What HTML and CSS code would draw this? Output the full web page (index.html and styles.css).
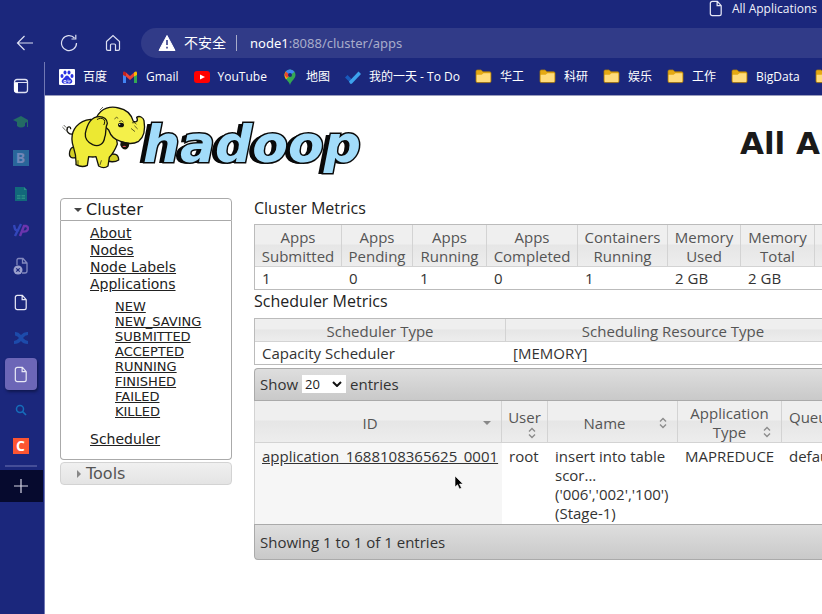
FILE: index.html
```html
<!DOCTYPE html>
<html lang="zh-CN">
<head>
<meta charset="utf-8">
<title>All Applications</title>
<link rel="stylesheet" href="styles.css">
</head>
<body>
<svg class="defs" aria-hidden="true">
  <symbol id="doc" viewBox="0 0 14 18"><path d="M3 1.5h5.5L12.500 6v8.500a2 2 0 0 1-2 2H3a2 2 0 0 1-2-2v-11a2 2 0 0 1 2-2zM8.200 1.500V6h4.300" fill="none" stroke="currentColor" stroke-width="1.300"/></symbol>
  <symbol id="folder" viewBox="0 0 18 16"><path d="M1 2.500Q1 1 2.500 1h4L8.500 3H15.500Q17 3 17 4.500V13q0 1.500-1.500 1.500h-13Q1 14.500 1 13z" fill="#e5a913" stroke="#a87b12" stroke-width=".8"/><path d="M1.700 6H7l2-1.500h7.300V13q0 .9-.9.9H2.600q-.9 0-.9-.9z" fill="#ffdc7c"/></symbol>
  <symbol id="sort" viewBox="0 0 8 12"><path d="M1 4.500 4 1.500 7 4.500M1 7.500 4 10.500 7 7.500" fill="none" stroke="#8c8c8c" stroke-width="1.400"/></symbol>
</svg>
<div class="browser">
  <div class="tabstrip">
    <svg class="doc-icon"><use href="#doc"/></svg>
    <span>All Applications</span>
  </div>
  <div class="toolbar">
    <button class="tool" aria-label="Back"><svg width="18" height="18" viewBox="0 0 18 18"><path d="M17 9H1.500M8.500 2 1.500 9l7 7"/></svg></button>
    <button class="tool" aria-label="Refresh"><svg width="18" height="18" viewBox="0 0 18 18"><path d="M16.500 9A7.500 7.500 0 1 1 14.500 4M15.800.8V5H11.500"/></svg></button>
    <button class="tool" aria-label="Home"><svg width="18" height="18" viewBox="0 0 18 18"><path d="M2.500 7.500 9 1.500l6.500 6V15q0 1.300-1.300 1.300H11.500V11q0-1-1-1h-3q-1 0-1 1v5.300H3.800Q2.500 16.300 2.500 15z"/></svg></button>
    <div class="address">
      <svg width="18" height="16" viewBox="0 0 18 16"><path d="M9 .5 17 15.500H1z" fill="#fff" stroke="#fff" stroke-linejoin="round"/><path d="M9 5v5M9 11.700v1.800" stroke="#313b88" stroke-width="1.600"/></svg>
      <span class="unsafe">不安全</span>
      <span class="bar"></span>
      <span class="url"><b>node1</b>:8088/cluster/apps</span>
    </div>
  </div>
  <div class="workspace">
    <nav class="vtabs" aria-label="Tabs">
      <button aria-label="Tab list"><svg width="16" height="16" viewBox="0 0 16 16"><rect x="1.500" y="1.500" width="13" height="13" rx="2.500" fill="none" stroke="#dfe1f2" stroke-width="1.300"/><path d="M1.500 4.500h13" stroke="#dfe1f2"/><path d="M1 5h4v9.500H3Q1 14.500 1 12.500z" fill="#fff"/></svg></button>
      <button aria-label="Courses"><svg width="16" height="16" viewBox="0 0 16 16"><path d="M0 6 8 2l7 4v7h-1V8l-2 1v3q-4 3-8 0V8z" fill="#246b64"/></svg></button>
      <button aria-label="B"><span class="tile tile-b">B</span></button>
      <button aria-label="Sheets"><svg width="16" height="16" viewBox="0 0 16 16"><path d="M2 1h9l3 3v11H2z" fill="#12697b"/><path d="M11 1l3 3h-3zM4 9h3.500v1.500H4zM8.500 9H12v1.500H8.500zM4 11.500h3.500V13H4zM8.500 11.500H12V13H8.500z" fill="#2a8d86"/></svg></button>
      <button aria-label="YP"><svg width="16" height="16" viewBox="0 0 16 16" fill="none" stroke-width="2.400"><path d="M1 3l1 4q.8 2 4 1M8 2 2 14" stroke="#3346bb"/><path d="M7 14 11 4h2q3 1 1.500 4-1 2-5 1.500" stroke="#6c35ad"/></svg></button>
      <button aria-label="Unavailable page"><svg width="16" height="18" viewBox="0 0 16 18"><path d="M4 8V3q0-1.500 1.500-1.500H10L14 6v8q0 2-2 2H9M9.500 1.500V6H14" fill="none" stroke="#8288bd" stroke-width="1.300"/><circle cx="5" cy="13" r="4.500" fill="#9a9fcc"/><path d="m3.300 11.300 3.400 3.400m0-3.400-3.400 3.400" stroke="#1b277c" stroke-width="1.200"/></svg></button>
      <button aria-label="Page"><svg class="doc-icon"><use href="#doc"/></svg></button>
      <button aria-label="Confluence"><svg width="16" height="16" viewBox="0 0 16 16"><path d="M2 2q3-.5 6 3 3-3.500 7-3v3q-3 0-5 3 2 2.500 5 3v3q-5 0-7-3-2.500 3-7 3v-3q3-.5 5-3-1-2-4-2.500z" fill="#1d4bab"/></svg></button>
      <button class="active" aria-label="All Applications"><svg class="doc-icon"><use href="#doc"/></svg></button>
      <button aria-label="Search"><svg width="12" height="12" viewBox="0 0 12 12"><circle cx="5" cy="5" r="3.500" fill="none" stroke="#166dba" stroke-width="1.500"/><path d="m7.500 7.500 3.500 3.500" stroke="#166dba" stroke-width="1.700"/></svg></button>
      <button aria-label="C"><span class="tile tile-c">C</span></button>
      <hr>
      <button class="add" aria-label="New tab"><svg width="16" height="16" viewBox="0 0 16 16"><path d="M8 1v14M1 8h14" stroke="#d7d8e6" stroke-width="1.200"/></svg></button>
    </nav>
    <div class="pane">
      <nav class="bookmarks" aria-label="Bookmarks">
        <a href="#"><svg width="16" height="16" viewBox="0 0 16 16"><rect width="16" height="16" rx="1" fill="#fff"/><g fill="#2932e1"><ellipse cx="3" cy="7" rx="1.500" ry="2"/><ellipse cx="6" cy="3.500" rx="1.500" ry="2"/><ellipse cx="10" cy="3.500" rx="1.500" ry="2"/><ellipse cx="13" cy="7" rx="1.500" ry="2"/><path d="M8 6.500q1.500 0 2.500 2l2 2q1.500 1.500.5 3t-3 1H6q-2 .5-3-1t.5-3l2-2q1-2 2.500-2z"/></g><path d="M5 11.500h2v2H5zM9 10.500v2.500h2v-2" fill="none" stroke="#fff" stroke-width=".8"/></svg>百度</a>
        <a href="#"><svg width="16" height="16" viewBox="0 0 16 16"><path d="M1 3.500V14h3V7z" fill="#4285f4"/><path d="M15 3.500V14h-3V7z" fill="#34a853"/><path d="M4 3.500 8 7l4-3.500v4L8 11 4 7.500z" fill="#ea4335"/><path d="M1 6V4q0-2 2-1.300l1 .8v4z" fill="#c5221f"/><path d="M15 6V4q0-2-2-1.300l-1 .8v4z" fill="#fbbc04"/></svg>Gmail</a>
        <a href="#"><svg width="16" height="16" viewBox="0 0 16 16"><rect y="2" width="16" height="12" rx="3" fill="#f00"/><path d="M6 5.500 11 8l-5 2.500z" fill="#fff"/></svg>YouTube</a>
        <a href="#"><svg width="16" height="16" viewBox="0 0 16 16"><path d="M8 .5a5.500 5.500 0 0 1 5.500 5.500c0 4-4 5-5.500 10-1-4-5.500-6-5.500-10A5.500 5.500 0 0 1 8 .5z" fill="#34a853"/><path d="M2.500 6a5.500 5.500 0 0 1 1.300-3.500L8 6l-4 4.500Q2.500 8.500 2.500 6z" fill="#fbbc04"/><path d="M3.800 2.500 8 6 5 9 2.500 6z" fill="#ea4335"/><path d="M3.800 2.500A5.500 5.500 0 0 1 12.500 3L8 6z" fill="#4285f4"/><circle cx="8" cy="6" r="2" fill="#1b277c"/></svg>地图</a>
        <a href="#"><svg width="16" height="16" viewBox="0 0 16 16"><path d="M0 8.500 2.500 6l6 6L6 14.500z" fill="#195abd"/><path d="m4 12.500 9.500-10L16 5l-9 9.500q-1 .8-2 0z" fill="#3da2ed"/></svg>我的一天 - To Do</a>
        <a href="#"><svg class="folder"><use href="#folder"/></svg>华工</a>
        <a href="#"><svg class="folder"><use href="#folder"/></svg>科研</a>
        <a href="#"><svg class="folder"><use href="#folder"/></svg>娱乐</a>
        <a href="#"><svg class="folder"><use href="#folder"/></svg>工作</a>
        <a href="#"><svg class="folder"><use href="#folder"/></svg>BigData</a>
        <a href="#" aria-label="More"><svg class="folder"><use href="#folder"/></svg></a>
      </nav>
      <div class="page">
        <header class="masthead">
          <a class="logo" href="#">
            <svg width="88" height="66" viewBox="30 20 264 198" stroke="#14140c" stroke-width="4" stroke-linejoin="round" stroke-linecap="round">
              <path d="M76 106c-18 12-28-4-24-14 2-5 10-4 10 2" fill="none"/>
              <path d="M77 150c-20-4-22 24-14 30 12 4 22 0 24-8M172 172c20-4 34-4 34 16-12 8-30 6-36 0z" fill="#d2cf25"/>
              <path d="M122 66C84 70 64 98 66 128c0 22 14 30 12 74q18 10 34 2l4-26q14 2 22 0l8 28q16 10 28 0l4-26q14-14 24-40l-10-64z" fill="#f0ec3a"/>
              <path d="M140 60C154 30 184 26 206 32c22 4 38 20 44 40 8 4 16 0 10-12 8-6 20 0 22 10 4 24 2 48-16 62-18 10-40 6-54 0-16-4-30-16-36-34l-34-32z" fill="#f4f04a"/>
              <path d="M214 134c-4 10 4 22 14 20 8-4 8-10 8-16z" fill="#171509"/>
              <path d="M217 149q6-8 12 0" fill="#d9535d" stroke="none"/>
              <path d="M148 58c-30 0-38 30-42 50-2 18 10 28 22 34 18 8 34-2 36-22 6-10 0-28 8-42 0-12-10-20-24-20z" fill="#ece832"/>
              <path d="M142 66c14-8 28 0 20 16" fill="none" stroke-width="3"/>
              <path d="M194 64q6-8 10-2M208 72q8-6 12 2" fill="none" stroke-width="2"/>
              <ellipse cx="213" cy="83" rx="7" ry="5" fill="#111"/>
              <circle cx="209" cy="81" r="2" fill="#fff" stroke="none"/>
              <path d="M244 94l10 8M254 86l8 8M247 76q10-2 12 4M84 190v12M154 190l-4 12M38 90l8 8M42 84l6 6M150 38l8-8" fill="none" stroke-width="2"/>
            </svg>
            <span class="wordmark">hadoop</span>
          </a>
          <h1>All Applications</h1>
        </header>
        <div class="columns">
          <nav class="side" aria-label="Cluster">
            <h3 class="open"><span class="arrow"></span>Cluster</h3>
            <div class="links">
              <ul>
                <li><a href="#">About</a></li>
                <li><a href="#">Nodes</a></li>
                <li><a href="#">Node Labels</a></li>
                <li><a href="#">Applications</a>
                  <ul>
                    <li><a href="#">NEW</a></li>
                    <li><a href="#">NEW_SAVING</a></li>
                    <li><a href="#">SUBMITTED</a></li>
                    <li><a href="#">ACCEPTED</a></li>
                    <li><a href="#">RUNNING</a></li>
                    <li><a href="#">FINISHED</a></li>
                    <li><a href="#">FAILED</a></li>
                    <li><a href="#">KILLED</a></li>
                  </ul>
                </li>
                <li><a href="#">Scheduler</a></li>
              </ul>
            </div>
            <h3 class="closed"><span class="arrow"></span>Tools</h3>
          </nav>
          <main class="content">
            <h2>Cluster Metrics</h2>
            <table class="metrics">
              <colgroup><col class="w87"><col class="w71"><col class="w74"><col class="w91"><col class="w90"><col class="w73"><col class="w74"><col></colgroup>
              <thead><tr><th>Apps Submitted</th><th>Apps Pending</th><th>Apps Running</th><th>Apps Completed</th><th>Containers Running</th><th>Memory Used</th><th>Memory Total</th><th></th></tr></thead>
              <tbody><tr><td>1</td><td>0</td><td>1</td><td>0</td><td>1</td><td>2 GB</td><td>2 GB</td><td></td></tr></tbody>
            </table>
            <h2>Scheduler Metrics</h2>
            <table class="metrics">
              <colgroup><col class="w251"><col class="w335"><col></colgroup>
              <thead><tr><th>Scheduler Type</th><th>Scheduling Resource Type</th><th></th></tr></thead>
              <tbody><tr><td>Capacity Scheduler</td><td>[MEMORY]</td><td></td></tr></tbody>
            </table>
            <div class="strip top">
              <label for="len">Show</label>
              <span class="picker"><select id="len"><option>20</option><option>40</option></select><svg width="10" height="6" viewBox="0 0 10 6"><path d="m1 1 4 4 4-4" fill="none" stroke="#111" stroke-width="2"/></svg></span>
              <span>entries</span>
            </div>
            <table class="apps">
              <colgroup><col class="w247"><col class="w46"><col class="w130"><col class="w104"><col></colgroup>
              <thead><tr>
                <th><div class="head"><span>ID</span><i class="desc"></i></div></th>
                <th><div class="head stack"><span>User</span><svg class="sort"><use href="#sort"/></svg></div></th>
                <th><div class="head"><span>Name</span><svg class="sort"><use href="#sort"/></svg></div></th>
                <th><div class="head low"><span>Application Type</span><svg class="sort"><use href="#sort"/></svg></div></th>
                <th class="left"><div class="head stack"><span>Queue</span><svg class="sort"><use href="#sort"/></svg></div></th>
              </tr></thead>
              <tbody><tr>
                <td class="sorted"><a href="#">application_1688108365625_0001</a></td>
                <td>root</td>
                <td>insert into table scor...<br>('006','002','100')<br>(Stage-1)</td>
                <td>MAPREDUCE</td>
                <td>default</td>
              </tr></tbody>
            </table>
            <div class="strip bottom">Showing 1 to 1 of 1 entries</div>
          </main>
        </div>
      </div>
    </div>
  </div>
</div>
<svg class="pointer" width="10" height="15" viewBox="0 0 10 15" aria-hidden="true"><path d="M1 1v11l2.500-2.300L5.500 14l2-1-2-4H9z" fill="#000" stroke="#fff" stroke-width=".6"/></svg>
</body>
</html>
```
FILE: styles.css
```css
* { box-sizing: border-box; }
body {
  margin: 0;
  overflow: hidden;
  background: #1b277c;
  color: #333;
  font-family: "Open Sans", "Noto Sans CJK SC", sans-serif;
  font-size: 15px;
}
h1, h2, h3, ul { margin: 0; padding: 0; }
ul { list-style: none; }
button { padding: 0; border: 0; background: none; }
svg { flex: none; }
.defs { position: absolute; width: 0; height: 0; }

/* Browser chrome */
.browser { display: flex; flex-direction: column; height: 100vh; overflow: hidden; }
.tabstrip {
  display: flex; justify-content: flex-end; align-items: flex-start; gap: 9px;
  height: 28px; padding-right: 5px;
  color: #f1f2fa; font: 12px/17px "Open Sans", sans-serif;
}
.doc-icon { width: 14px; height: 17px; color: #e6e7f5; }
.toolbar { display: flex; flex: none; align-items: flex-start; height: 34px; padding-left: 3px; }
.tool { display: grid; place-items: center; width: 44px; height: 30px; }
.tool svg { fill: none; stroke: #dcdff2; stroke-width: 1.2; }
.address {
  display: flex; flex: 1; align-items: center; gap: 8px;
  height: 30px; margin-left: 6px; padding-left: 17px;
  border-radius: 15px 0 0 15px; background: #313b88;
  color: #a8acca; font: 13px/20px "Noto Sans", "Noto Sans CJK SC", sans-serif;
}
.unsafe { color: #fff; font-size: 14px; }
.bar { width: 1px; height: 16px; margin: 0 5px 0 2px; background: #a8acca; }
.url b { color: #fff; font-weight: 400; }
.workspace { display: flex; flex: 1; min-height: 0; }
.vtabs {
  display: flex; flex: none; flex-direction: column; align-items: center;
  width: 45px; padding-top: 6px; border-right: 1px solid #7178b4;
}
.vtabs button { display: grid; place-items: center; flex: none; width: 32px; height: 32px; margin: 2px 3px 2px 0; border-radius: 4px; }
.vtabs .active { background: #6c66b7; box-shadow: 1px 2px 3px #10184f; }
.vtabs hr { width: 32px; height: 2px; margin: 1px 3px 3px 0; border: 0; background: #454e98; }
.vtabs .add { align-self: stretch; width: auto; margin: 0 1px 0 0; padding-right: 2px; border-radius: 0; background: #060a2e; }
.tile { display: grid; place-items: center; width: 16px; height: 16px; font: 700 14px/16px "Open Sans", sans-serif; }
.tile-b { background: #29669a; color: #7186b9; }
.tile-c { background: #fc5531; color: #fff; }
.pane { display: flex; flex: 1; flex-direction: column; min-width: 0; }
.bookmarks {
  display: flex; flex: none; align-items: center; gap: 15px;
  height: 34px; padding: 0 0 4px 14px; overflow: hidden; border-bottom: 1px solid #9a9dbd;
}
.bookmarks a {
  display: flex; flex: none; align-items: center; gap: 8px;
  color: #fff; font: 12px/18px "Open Sans", "Noto Sans CJK SC", sans-serif; text-decoration: none;
}
.folder { width: 17px; height: 15px; }

/* Page */
.page { flex: 1; overflow: hidden; background: #fff; }
.masthead { display: flex; align-items: center; justify-content: space-between; height: 94px; padding: 0 0 0 15px; }
.logo { display: flex; flex: none; align-items: center; text-decoration: none; margin-top: -12px; }
.wordmark {
  margin: 14px 0 0 -5px;
  color: #a2dcfa; font: italic 700 52px/60px "DejaVu Sans", sans-serif;
  -webkit-text-stroke: 3px #0a0a0a; paint-order: stroke fill;
  text-shadow: -1px 0 #0a0a0a, -2px 1px #0a0a0a, -3px 1px #0a0a0a, -4px 1px #0a0a0a, -5px 1px #0a0a0a;
}
.masthead h1 { flex: none; width: 82px; color: #1a1a1a; font: 700 31px/40px "DejaVu Sans", sans-serif; white-space: nowrap; }
.columns { display: flex; align-items: flex-start; padding: 8px 0 0 15px; }
.side { flex: none; width: 172px; margin-right: 22px; font-family: "DejaVu Sans", sans-serif; }
.side h3 { display: flex; align-items: center; height: 23px; padding-left: 13px; border: 1px solid #aaa; font-size: 16px; font-weight: 400; }
.side .open { border-radius: 4px 4px 0 0; color: #212121; }
.side .closed { margin-top: 2px; border-color: #d3d3d3; border-radius: 4px; background: linear-gradient(#f0f0f0, #e4e4e4); color: #555; }
.arrow { width: 8px; margin-right: 4px; }
.arrow::before { content: ""; display: block; width: 0; border: 4px solid transparent; }
.open .arrow::before { margin-top: 4px; border-top-color: #454545; }
.closed .arrow::before { margin-left: 3px; border-left-color: #888; }
.links { padding: 4px 0 11px 29px; border: 1px solid #aaa; border-top: 0; border-radius: 0 0 4px 4px; font-size: 14px; line-height: 17px; }
.links a { color: #212121; }
.links ul ul { padding: 6px 0 12px 25px; font-size: 13px; line-height: 15px; }
.content { flex: 1; min-width: 0; overflow: hidden; }
h2 { height: 26px; color: #222; font-size: 16px; font-weight: 400; line-height: 20px; }
.metrics + h2 { height: 28px; line-height: 22px; }
table { width: 900px; border-collapse: separate; border-spacing: 0; table-layout: fixed; }
th {
  border-right: 1px solid #d3d3d3; border-bottom: 1px solid #d3d3d3;
  background: linear-gradient(#efefef 45%, #e6e6e6 50%, #ededed);
  color: #555; font-weight: 400; line-height: 19px;
}
td { padding: 2px 0 1px 7px; line-height: 19px; vertical-align: top; }
.metrics { border: 1px solid #bbb; }
.metrics th { padding: 3px 0 0; }
.w46 { width: 46px; }
.w71 { width: 71px; }
.w73 { width: 73px; }
.w74 { width: 74px; }
.w87 { width: 87px; }
.w90 { width: 90px; }
.w91 { width: 91px; }
.w104 { width: 104px; }
.w130 { width: 130px; }
.w247 { width: 247px; }
.w251 { width: 251px; }
.w335 { width: 335px; }
.strip {
  display: flex; align-items: center; gap: 4px; padding-left: 5px;
  border: 1px solid #aaa; border-right: 0; background: linear-gradient(#dedede, #c9c9c9);
}
.top { height: 33px; margin-top: 3px; padding-bottom: 2px; border-radius: 4px 0 0 0; }
.bottom { height: 36px; border-radius: 0 0 0 4px; }
.picker { display: grid; grid-template-columns: 30px 14px; align-items: center; width: 44px; height: 18px; background: #fff; }
.picker select {
  grid-area: 1 / 1 / 2 / 3; width: 44px; height: 18px; padding: 0 0 0 3px; border: 0;
  appearance: none; background: none; color: #222; font: 13px/18px "Open Sans", sans-serif;
}
.picker svg { grid-area: 1 / 2; pointer-events: none; }
.apps { border-left: 1px solid #d3d3d3; }
.apps th { height: 41px; padding: 3px 10px 0 2px; }
.apps th:nth-child(2) { padding: 3px 0 0; }
.apps .left { padding-left: 7px; }
.head { display: flex; align-items: center; justify-content: space-between; }
.head span { flex: 1; }
.stack { flex-direction: column; }
.stack span { flex: none; }
.stack .sort { margin-left: 14px; }
.left .stack { align-items: flex-start; }
.left .sort { margin-left: 40px; }
.low { display: grid; grid-template-columns: 1fr; align-items: end; }
.low span, .low .sort { grid-area: 1 / 1; }
.low span { padding-left: 8px; }
.sort { width: 8px; height: 12px; }
.low .sort { justify-self: end; margin-bottom: 4px; }
.desc { border: 4px solid transparent; border-top-color: #888; border-bottom: 0; }
.apps td { height: 80px; padding-top: 4px; }
.sorted { background: #f6f6f6; }
.apps td a { color: #333; }

.pointer { position: absolute; left: 454px; top: 475px; }
```
